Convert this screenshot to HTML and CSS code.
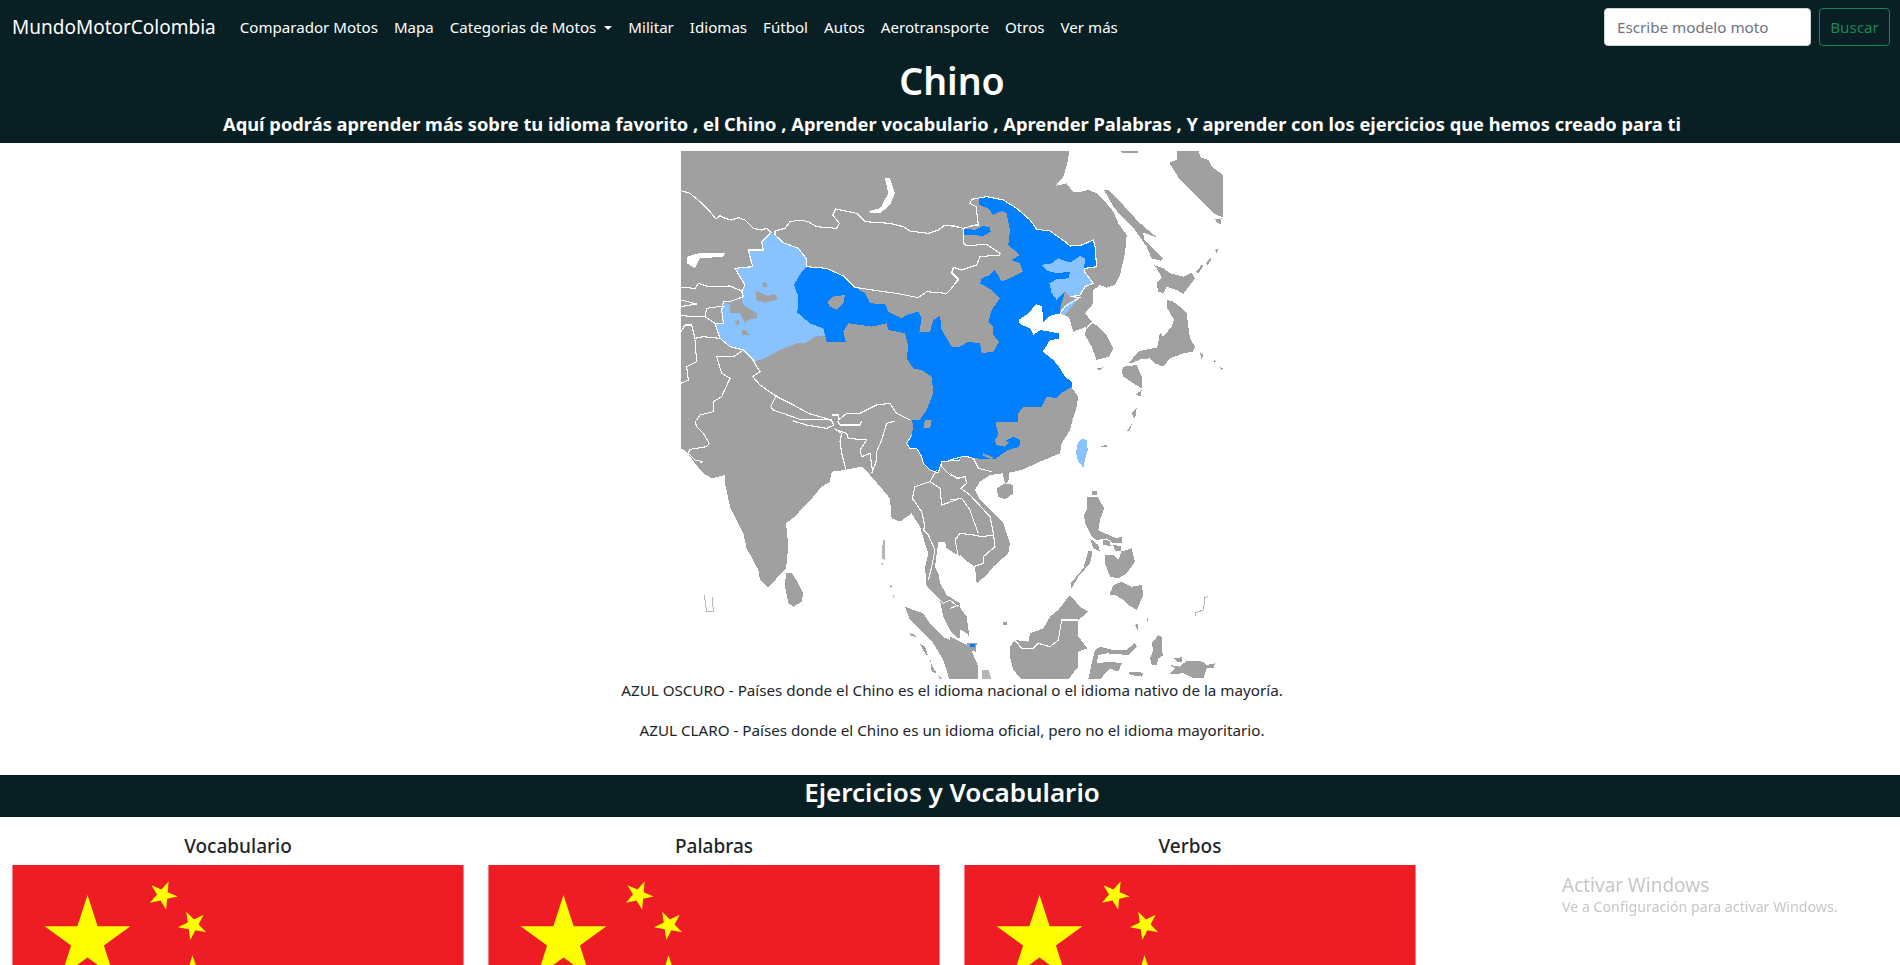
FILE: index.html
```html
<!DOCTYPE html>
<html lang="es">
<head>
<meta charset="utf-8">
<title>Chino</title>
<link rel="stylesheet" href="styles.css">
</head>
<body>
<svg class="defs" width="0" height="0" aria-hidden="true">
  <symbol id="china-flag" viewBox="0 0 30 20">
    <rect width="30" height="20" fill="#ee1c25"/>
    <g fill="#ffff00">
      <polygon transform="translate(5 5) scale(3)" points="0,-1 .2245,-.309 .951,-.309 .363,.118 .588,.809 0,.382 -.588,.809 -.363,.118 -.951,-.309 -.2245,-.309"/>
      <polygon transform="translate(10 2) rotate(-120.96)" points="0,-1 .2245,-.309 .951,-.309 .363,.118 .588,.809 0,.382 -.588,.809 -.363,.118 -.951,-.309 -.2245,-.309"/>
      <polygon transform="translate(12 4) rotate(-98.13)" points="0,-1 .2245,-.309 .951,-.309 .363,.118 .588,.809 0,.382 -.588,.809 -.363,.118 -.951,-.309 -.2245,-.309"/>
      <polygon transform="translate(12 7) rotate(-74.05)" points="0,-1 .2245,-.309 .951,-.309 .363,.118 .588,.809 0,.382 -.588,.809 -.363,.118 -.951,-.309 -.2245,-.309"/>
      <polygon transform="translate(10 9) rotate(-51.34)" points="0,-1 .2245,-.309 .951,-.309 .363,.118 .588,.809 0,.382 -.588,.809 -.363,.118 -.951,-.309 -.2245,-.309"/>
    </g>
  </symbol>
</svg>

<header class="top">
  <nav class="navbar">
    <a class="brand" href="#">MundoMotorColombia</a>
    <ul class="nav-links">
      <li><a href="#">Comparador Motos</a></li>
      <li><a href="#">Mapa</a></li>
      <li><a href="#" class="dropdown">Categorias de Motos</a></li>
      <li><a href="#">Militar</a></li>
      <li><a href="#">Idiomas</a></li>
      <li><a href="#">Fútbol</a></li>
      <li><a href="#">Autos</a></li>
      <li><a href="#">Aerotransporte</a></li>
      <li><a href="#">Otros</a></li>
      <li><a href="#">Ver más</a></li>
    </ul>
    <form class="search">
      <input class="search-input" type="text" placeholder="Escribe modelo moto">
      <button class="search-btn" type="button">Buscar</button>
    </form>
  </nav>
  <div class="hero">
    <h1>Chino</h1>
    <p class="lead">Aquí podrás aprender más sobre tu idioma favorito , el Chino , Aprender vocabulario , Aprender Palabras , Y aprender con los ejercicios que hemos creado para ti</p>
  </div>
</header>

<main>
  <section class="map-section">
    <svg class="map" viewBox="681 151 542 528" width="542" height="528" role="img" aria-label="Mapa del idioma chino en Asia">
      <!-- top-left quadrant -->
      <g transform="translate(680 150) scale(.33333)">
        <rect class="land" x="0" y="0" width="840" height="815"/>
        <polygon class="lake" points="615,85 630,85 645,130 630,165 600,190 570,190 568,183 600,175 625,130"/>
        <polygon class="lake" points="22,320 55,310 135,310 130,320 60,325 45,355 20,340"/>
      </g>
      <!-- top-right quadrant land -->
      <g class="land" transform="translate(950 150) scale(.33333)">
        <polygon points="0,3 358,3 352,40 340,80 316,108 350,100 368,125 395,125 415,120 440,130 465,155 490,185 505,220 530,255 525,310 510,375 495,405 470,413 450,405 430,420 430,460 405,490 425,515 445,530 470,555 490,595 478,620 440,630 425,590 405,555 410,530 370,545 358,505 332,490 300,497 280,518 278,490 275,468 258,463 235,490 205,510 210,522 240,535 250,555 272,540 326,550 326,567 300,570 278,605 310,630 330,655 345,680 365,695 365,712 385,740 378,780 365,815 0,815"/>
        <polygon points="462,120 475,120 510,155 565,215 620,262 580,248 582,270 612,300 640,325 632,332 605,325 590,290 555,240 520,205 490,170"/>
        <polygon points="680,3 745,3 752,22 775,30 785,50 815,72 825,85 825,205 790,190 770,170 730,130 690,90 665,50 658,38 680,30"/>
        <polygon points="610,345 640,355 660,370 700,380 725,368 735,385 700,432 680,420 650,410 640,430 625,425 620,400 635,382 620,355"/>
        <polygon points="650,450 670,455 690,470 710,490 715,530 720,565 735,590 728,605 700,610 680,618 660,625 640,650 615,640 600,625 570,628 545,640 535,640 548,625 570,603 600,597 622,592 625,575 630,548 640,560 665,530 672,510 652,475"/>
        <polygon points="520,650 560,645 575,680 575,715 550,700 520,680 515,665"/>
        <polygon points="440,655 458,652 450,662"/>
        <polygon points="555,735 575,720 572,738"/>
        <polygon points="545,790 560,775 555,808"/>
        <polygon points="510,3 565,3 565,10 520,10"/>
        <polygon points="738,365 755,345 760,348 745,370"/>
        <polygon points="768,340 782,322 785,330 772,345"/>
        <polygon points="795,300 805,295 800,310"/>
        <polygon points="795,208 815,205 812,222 800,218"/>
        <polygon points="750,610 760,612 755,630"/>
        <polygon points="790,630 798,632 795,640"/>
        <polygon points="810,652 820,655 815,660"/>
      </g>
      <!-- bottom-left quadrant land -->
      <g class="land" transform="translate(680 420) scale(.33333)">
        <polygon points="3,0 3,85 20,95 45,130 70,160 95,175 135,165 135,190 150,260 190,340 200,385 235,450 240,480 265,502 290,475 318,445 325,380 318,310 345,290 362,270 400,230 425,200 450,185 455,155 495,150 545,140 570,165 605,205 630,235 635,295 660,305 695,280 720,320 735,370 745,400 735,440 740,500 780,540 790,590 810,630 832,655 840,655 840,550 800,525 780,490 775,460 765,440 775,365 795,365 800,385 840,410 840,0"/>
        <polygon points="318,458 335,458 355,490 370,520 365,545 340,560 325,550 315,500"/>
        <polygon points="675,560 700,570 730,580 750,610 790,652 835,668 840,778 808,778 790,720 760,670 720,630 690,600"/>
        <polygon points="690,640 705,645 708,652 690,645"/>
        <polygon points="720,672 735,680 745,708 735,700"/>
        <polygon points="750,712 755,735 770,760 755,755"/>
        <polygon class="land-soft" points="775,765 790,778 778,778"/>
        <polygon class="land-soft" points="610,360 615,360 615,420 605,415 605,390"/>
        <polygon class="land-soft" points="603,430 610,430 610,440"/>
        <polygon class="land-soft" points="630,495 636,495 632,508"/>
        <polygon class="land-soft" points="638,520 645,535 638,530"/>
        <polyline class="soft-line" points="73,525 80,575 100,575 97,530"/>
      </g>
      <!-- bottom-right quadrant land -->
      <g class="land" transform="translate(950 420) scale(.33333)">
        <polygon points="0,0 368,0 360,30 335,70 330,100 270,125 215,150 178,158 158,160 120,165 90,185 75,210 90,240 130,280 160,310 180,370 175,400 130,440 110,465 80,490 75,440 45,420 20,390 0,350"/>
        <polygon points="140,205 165,190 190,195 190,220 165,238 145,230"/>
        <polygon points="158,160 178,158 175,185 165,190"/>
        <polygon points="0,530 20,550 50,590 58,650 50,640 0,610"/>
        <polygon points="0,650 30,665 60,680 85,740 85,778 0,778"/>
        <polygon points="50,668 80,670 78,695 60,690"/>
        <polygon class="land-soft" points="95,750 115,750 125,778 95,778"/>
        <polygon points="180,680 195,660 235,665 240,640 280,625 300,590 325,570 360,525 390,560 415,575 385,600 385,650 412,685 385,695 385,740 355,778 215,778 190,750 180,710"/>
        <polygon points="415,392 428,395 420,430 385,470 365,505 362,490 400,445"/>
        <polygon points="410,232 445,232 462,265 450,300 445,330 465,340 500,355 515,350 515,370 490,370 470,355 440,360 425,350 405,310 402,285 412,265"/>
        <polygon points="420,355 445,375 450,395 430,385"/>
        <polygon points="458,360 478,362 482,378 460,375"/>
        <polygon points="490,375 512,378 515,395 495,392"/>
        <polygon points="465,405 490,405 505,418 515,395 545,385 555,425 530,460 505,475 480,470 465,430"/>
        <polygon points="490,495 515,485 545,500 575,495 580,525 560,570 535,555 520,540 495,525 478,525"/>
        <polygon points="450,680 490,690 530,690 555,668 560,680 535,705 470,700 445,705 440,730 480,725 515,730 505,755 480,745 450,778 415,778 425,730 435,690"/>
        <polygon points="625,645 635,650 635,690 640,705 625,715 620,735 605,735 600,715 610,690 605,670"/>
        <polygon points="660,735 690,740 710,722 760,725 770,735 795,730 790,745 770,745 760,775 730,775 700,760 660,762 675,745"/>
        <polygon points="670,715 695,712 697,725 680,725"/>
        <polygon points="535,755 580,758 575,770 540,765"/>
        <polygon points="158,605 170,605 170,615 160,615"/>
        <polygon points="452,78 470,75 470,80 455,83"/>
        <polygon points="530,35 545,12 540,30"/>
        <polygon points="425,215 440,212 440,225 425,225"/>
        <polygon points="555,615 565,610 565,635"/>
        <polygon points="590,595 595,595 590,612"/>
        <polyline class="soft-line" points="775,530 765,532 760,570 738,578 738,588"/>
      </g>

      <!-- dark blue -->
      <g class="blue" transform="translate(680 150) scale(.33333)">
        <polygon points="372,350 440,355 490,378 525,412 555,430 570,460 615,462 625,485 665,505 680,495 715,485 725,505 718,545 750,545 760,510 780,497 785,540 815,590 840,590 840,815 715,815 740,780 760,730 755,680 725,660 700,655 680,625 685,590 675,550 625,540 620,520 575,530 505,520 490,545 497,575 440,575 430,535 390,520 352,488 355,440 342,405 362,370"/>
        <polygon class="land" points="442,455 460,440 495,435 490,460 470,480 450,470"/>
      </g>
      <g class="blue" transform="translate(950 150) scale(.33333)">
        <polygon points="88,145 110,140 160,150 200,175 240,210 260,238 300,243 345,275 360,288 395,285 430,270 435,290 440,350 405,355 403,365 430,400 405,410 390,435 360,440 345,425 330,475 330,490 300,497 280,518 278,490 275,468 258,463 235,490 205,510 210,522 240,535 250,555 272,540 326,550 326,567 300,570 278,605 310,630 330,655 345,680 365,695 365,712 340,725 320,745 290,740 275,770 220,770 205,790 205,815 0,815 0,590 30,590 55,575 90,580 95,610 130,605 147,575 130,555 130,530 115,515 125,480 150,445 125,420 90,400 95,385 120,375 135,360 155,395 190,380 218,365 210,340 185,330 210,315 175,285 180,240 170,190 155,183 130,195 115,175 88,165"/>
        <polygon points="40,235 75,240 100,228 120,232 122,245 100,258 70,255 40,255"/>
      </g>
      <g class="blue" transform="translate(680 420) scale(.33333)">
        <polygon points="695,0 700,20 695,45 680,70 690,85 710,85 725,110 730,130 750,150 775,158 785,125 840,120 840,0"/>
        <polygon class="land" points="735,0 755,0 750,25 730,25"/>
      </g>
      <g class="blue" transform="translate(950 420) scale(.33333)">
        <polygon points="0,0 135,0 145,45 135,60 140,75 165,80 178,68 166,62 190,50 210,60 208,80 170,92 135,118 100,118 40,108 0,120"/>
        <polygon class="land" points="100,100 130,112 125,118 100,108"/>
        <polygon points="60,672 75,672 75,682 60,682"/>
      </g>

      <!-- light blue -->
      <g class="sky" transform="translate(680 150) scale(.33333)">
        <polygon points="270,250 285,255 310,278 355,295 378,325 380,350 362,370 342,405 355,440 352,488 390,520 430,535 435,558 405,560 375,580 350,580 300,600 265,620 225,635 190,600 150,590 120,565 105,520 130,520 125,480 135,455 148,465 190,440 185,425 195,405 165,355 218,350 205,300 250,300 245,275"/>
        <g class="land">
          <polygon points="247,400 258,395 262,410 250,412"/>
          <polygon points="228,422 245,430 265,438 285,432 292,448 255,458 228,450"/>
          <polygon points="150,465 185,445 190,465 230,490 230,503 205,510 195,520 180,490 150,490"/>
          <polygon points="165,515 175,510 180,522 170,525"/>
          <polygon points="185,540 200,542 208,555 185,555"/>
        </g>
      </g>
      <g class="sky" transform="translate(950 150) scale(.33333)">
        <polygon points="273,345 305,340 325,325 360,338 390,318 405,325 403,350 405,365 430,400 405,410 390,435 360,440 345,425 320,450 305,430 298,400 320,388 355,385 360,365 320,370 290,362"/>
        <polygon points="330,490 345,465 365,450 385,445 345,495"/>
      </g>
      <polygon class="sky" transform="translate(950 420) scale(.33333)" points="395,55 410,60 413,90 405,120 400,143 385,125 378,100 383,70"/>

      <!-- borders -->
      <g class="borders" transform="translate(680 150) scale(.33333)">
        <polyline points="3,122 30,130 60,155 90,185 108,207 120,197 135,205 155,210 175,203 195,210 220,235 245,240 260,235 275,250"/>
        <polyline points="285,255 285,243 315,235 330,215 360,210 385,215 410,230 470,235 478,220 458,195 467,177 530,190 555,215 630,220 670,230 690,243 745,250 775,240 795,225 840,232"/>
        <polyline points="820,355 815,370 835,390 810,420 800,430 740,425 715,443 650,430 610,425 525,412"/>
        <polyline points="285,255 310,278 355,295 378,325 380,350 440,355 490,378 525,412"/>
        <polyline points="270,250 245,275 250,300 205,300 218,350 165,355 195,405 185,425 190,440 148,455 130,455 125,480 130,520 105,520 120,565 150,590 190,600 225,635"/>
        <polyline points="3,412 45,415 55,400 85,410 150,408 190,425"/>
        <polyline points="3,450 50,462 3,470"/>
        <polyline points="3,495 30,500 75,500 80,475 115,470 135,470"/>
        <polyline points="75,500 105,520"/>
        <polyline points="3,545 15,525 35,525 45,565 70,560 120,565"/>
        <polyline points="45,570 50,635 20,650 25,690 3,700"/>
        <polyline points="190,600 160,620 110,620 125,670 150,685 125,740 100,755 100,785 60,795 50,810"/>
        <polyline points="218,630 240,665 218,680 240,705 290,740 340,765 385,790 455,810"/>
        <polyline points="290,735 272,770 280,780 360,808 455,810"/>
        <polyline points="475,810 500,790 540,790 590,765 630,760 650,790 690,810"/>
        <polyline points="455,795 475,795 475,810"/>
      </g>
      <g class="borders" transform="translate(950 150) scale(.33333)">
        <polyline points="0,225 30,232 40,235 40,280 50,287 110,283 150,310 148,315 90,320 80,345 35,360 10,352 5,365 25,385 5,415"/>
        <polyline points="40,235 75,225 85,225 78,170 60,160 65,148 110,140 160,150 200,175 240,210 260,238 300,243 345,275 360,288 395,285 430,270 435,290 440,350 405,355 403,365 430,400 405,410 390,435 360,440 390,442 345,470 330,490"/>
        <polyline points="330,490 358,505"/>
        <polyline points="405,540 425,518 435,520"/>
      </g>
      <g class="borders" transform="translate(680 420) scale(.33333)">
        <polyline points="45,3 50,20 70,40 88,70 80,80 30,88 25,100 45,120 70,125 60,128"/>
        <polyline points="340,3 380,15 440,25 462,15 455,3"/>
        <polyline points="473,3 480,15 540,15 545,3"/>
        <polyline points="462,25 485,40 480,65 485,100 498,150"/>
        <polyline points="470,30 500,40 505,55 560,60 540,90 545,110 570,100 578,155"/>
        <polyline points="645,3 620,10 605,60 590,95 590,120 575,160"/>
        <polyline points="770,150 750,185 705,200 697,235 725,275 735,320 730,330 745,345 765,390 755,440 745,480"/>
        <polyline points="695,45 680,70 690,85 710,85 725,110 730,130 750,150 775,158 785,125 840,120"/>
        <polyline points="750,185 780,205 785,255 800,250 840,235"/>
        <polyline points="785,125 785,140 810,165 840,175"/>
        <polyline points="775,535 790,550 810,540 835,560"/>
      </g>
      <g class="borders" transform="translate(950 420) scale(.33333)">
        <polyline points="0,120 45,108 70,115 85,145 125,155"/>
        <polyline points="0,160 20,175 45,170 50,190 33,205 60,225 120,290 130,340 135,380 100,410 100,430 70,440"/>
        <polyline points="15,360 30,340 70,345 95,350 130,345"/>
        <polyline points="15,360 25,410"/>
        <polyline points="0,240 35,235 60,270 70,300 85,340"/>
        <polyline points="195,660 215,685 250,685 265,670 300,680 325,660 335,600 385,600"/>
        <polyline points="0,565 25,555"/>
      </g>
    </svg>
    <p class="caption">AZUL OSCURO - Países donde el Chino es el idioma nacional o el idioma nativo de la mayoría.</p>
    <p class="caption">AZUL CLARO - Países donde el Chino es un idioma oficial, pero no el idioma mayoritario.</p>
  </section>

  <h2 class="band">Ejercicios y Vocabulario</h2>

  <section class="cards">
    <article class="card">
      <h3>Vocabulario</h3>
      <svg class="flag" viewBox="0 0 30 20"><use href="#china-flag"/></svg>
    </article>
    <article class="card">
      <h3>Palabras</h3>
      <svg class="flag" viewBox="0 0 30 20"><use href="#china-flag"/></svg>
    </article>
    <article class="card">
      <h3>Verbos</h3>
      <svg class="flag" viewBox="0 0 30 20"><use href="#china-flag"/></svg>
    </article>
  </section>
</main>

<aside class="watermark">
  <div class="wm-title">Activar Windows</div>
  <div class="wm-sub">Ve a Configuración para activar Windows.</div>
</aside>
</body>
</html>
```
FILE: styles.css
```css
* { box-sizing: border-box; }
html, body { overflow: hidden; height: 965px; }
body {
  margin: 0;
  font-family: "Noto Sans", "Open Sans", sans-serif;
  font-size: 15.2px;
  line-height: 24px;
  color: #212529;
  background: #fff;
}
a { color: inherit; text-decoration: none; }
.defs { position: absolute; }

.top { background: #081f24; color: #fff; height: 143px; }
.navbar {
  display: flex;
  align-items: center;
  height: 54px;
  padding: 0 10px 0 12px;
}
.brand { font-size: 19px; margin-right: 16px; white-space: nowrap; }
.nav-links {
  display: flex;
  gap: 16px;
  list-style: none;
  margin: 0;
  padding: 0 0 0 8px;
  font-size: 15.1px;
  flex: 1;
}
.nav-links a { white-space: nowrap; }
.dropdown::after {
  content: "";
  display: inline-block;
  margin-left: 8px;
  vertical-align: 3px;
  border-top: 4.8px solid #fff;
  border-left: 4.8px solid transparent;
  border-right: 4.8px solid transparent;
}
.search { display: flex; gap: 8px; }
.search-input {
  width: 207px;
  height: 38px;
  border: 1px solid #ced4da;
  border-radius: 4px;
  padding: 0 12px;
  font: inherit;
  background: #fff;
}
.search-input::placeholder { color: #6c757d; }
.search-btn {
  width: 71px;
  height: 38px;
  background: transparent;
  border: 1px solid #198754;
  border-radius: 4px;
  color: #198754;
  font: inherit;
  padding: 0;
}

.hero { width: 1904px; padding-top: 3px; text-align: center; }
.hero h1 { margin: 0; font-size: 37.5px; line-height: 48px; font-weight: 600; }
.lead { margin: 7px 0 0; font-size: 18.3px; line-height: 24px; font-weight: 700; }

.map-section { width: 1904px; padding-top: 8px; text-align: center; }
.map { display: block; margin: 0 auto; shape-rendering: crispEdges; }
.caption { margin: 0 0 17px; line-height: 23px; }
.caption:last-child { margin-bottom: 33px; }

.land, .land polygon { fill: #a0a0a0; }
.land-soft, .land polygon.land-soft { fill: #b6b6b6; }
.lake { fill: #fff; }
.blue polygon { fill: #0080ff; }
.blue polygon.land { fill: #a0a0a0; }
.sky, .sky > polygon { fill: #88c2ff; }
.borders polyline {
  fill: none;
  stroke: #fff;
  stroke-width: 1.1;
  vector-effect: non-scaling-stroke;
}
.soft-line {
  fill: none;
  stroke: #b6b6b6;
  stroke-width: 1;
  vector-effect: non-scaling-stroke;
}

.band {
  margin: 0;
  height: 42px;
  background: #081f24;
  color: #fff;
  font-size: 26px;
  line-height: 34px;
  font-weight: 600;
  text-align: center;
  width: 100%;
  padding-left: 4px;
}

.cards {
  display: grid;
  grid-template-columns: repeat(4, 476px);
  width: 1904px;
  padding-top: 17px;
}
.card { padding: 0 12px; }
.card h3 {
  margin: 0 0 7px;
  font-size: 19px;
  line-height: 24px;
  font-weight: 500;
  text-align: center;
}
.flag { display: block; width: 452px; height: 301px; }

.watermark {
  position: fixed;
  left: 1562px;
  top: 873px;
  color: #c6c6c6;
  white-space: nowrap;
}
.wm-title { font-size: 19px; line-height: 24px; }
.wm-sub { font-size: 14.2px; line-height: 20px; }
```
